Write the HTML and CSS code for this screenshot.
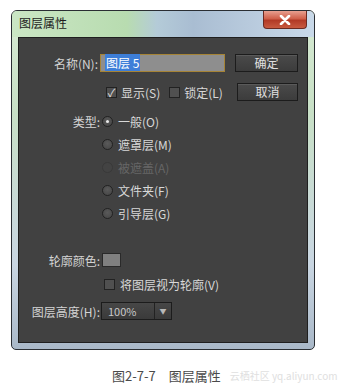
FILE: index.html
```html
<!DOCTYPE html>
<html>
<head>
  <title>图层属性</title>
  <link rel="stylesheet" href="styles.css">
</head>
<body>
  <div class="window">
    <div class="titlebar">
      <span class="title">图层属性</span>
      <span class="close">
        <svg width="14" height="10" viewBox="0 0 14 10"><path d="M3 1 L11 9 M11 1 L3 9" stroke="#fff" stroke-width="2.6" stroke-linecap="round"/></svg>
      </span>
    </div>
    <div class="content">
      <div class="top">
        <label class="lbl">名称(N):</label>
        <div class="name-input"><span class="sel">图层 5</span></div>
        <button class="btn">确定</button>

        <span></span>
        <div class="checks">
          <span class="check on">✓</span><span class="txt">显示(S)</span>
          <span class="check"></span><span class="txt">锁定(L)</span>
        </div>
        <button class="btn cancel">取消</button>
      </div>

      <div class="types">
        <div class="row">
          <label class="lbl">类型:</label>
          <span class="radio on"></span><span class="txt">一般(O)</span>
        </div>
        <div class="row">
          <span></span>
          <span class="radio"></span><span class="txt">遮罩层(M)</span>
        </div>
        <div class="row disabled">
          <span></span>
          <span class="radio"></span><span class="txt">被遮盖(A)</span>
        </div>
        <div class="row">
          <span></span>
          <span class="radio"></span><span class="txt">文件夹(F)</span>
        </div>
        <div class="row">
          <span></span>
          <span class="radio"></span><span class="txt">引导层(G)</span>
        </div>
      </div>

      <div class="row color-row">
        <label class="lbl">轮廓颜色:</label>
        <span class="swatch"></span>
      </div>
      <div class="row outline-row">
        <span></span>
        <span class="check"></span><span class="txt">将图层视为轮廓(V)</span>
      </div>
      <div class="row height-row">
        <label class="lbl">图层高度(H):</label>
        <div class="select">
          <span class="val">100%</span>
          <span class="arrow">▼</span>
        </div>
      </div>
    </div>
  </div>
  <div class="caption">
    <span>图2-7-7　图层属性</span>
    <span class="mark">云栖社区 yq.aliyun.com</span>
  </div>
</body>
</html>
```

FILE: styles.css
```css
body {
  margin: 0;
  padding: 10px 0 0 11px;
  background: #fff;
  font-family: "Noto Sans CJK SC", "Liberation Sans", sans-serif;
  font-size: 12px;
}

.window {
  width: 304px;
  height: 340px;
  border: 1px solid #2a2e33;
  border-radius: 6px 6px 5px 5px;
  background: linear-gradient(180deg, #d6ead2 0%, #c8e0c6 30%, #c9d6e2 75%, #a9b8c8 100%);
  padding: 0 6px 6px 6px;
  box-sizing: border-box;
  overflow: hidden;
}

.titlebar {
  height: 26px;
  margin: 0 -6px;
  padding: 0 7px 0 7px;
  display: flex;
  justify-content: space-between;
  align-items: flex-start;
  background: linear-gradient(90deg, #cae6c4 0%, #b8dcb0 38%, #b4cbd8 48%, #a9bdd2 60%, #c9d9e9 100%);
}

.title {
  margin-top: 5px;
  color: #1c1c1c;
  font-size: 12px;
  line-height: 14px;
}

.close {
  width: 44px;
  height: 18px;
  border: 1px solid #6b2a22;
  border-top: none;
  border-radius: 0 0 4px 4px;
  background: linear-gradient(180deg, #e8a090 0%, #d0604a 45%, #b23a26 55%, #c85a40 100%);
  display: flex;
  align-items: center;
  justify-content: center;
  box-sizing: border-box;
}

.content {
  height: 306px;
  background: #414141;
  border: 1px solid #1f1f1f;
  box-sizing: border-box;
  color: #d8d8d8;
  padding-top: 16px;
}

.top {
  display: grid;
  grid-template-columns: 81px 135px 63px;
  row-gap: 11px;
  align-items: center;
}

.lbl {
  text-align: right;
  padding-right: 2px;
  white-space: nowrap;
  color: #d4d4d4;
}

.name-input {
  height: 18px;
  width: 125px;
  box-sizing: border-box;
  border: 1px solid #a68436;
  background: #8e8e8e;
  padding: 1px 0 0 4px;
  line-height: 14px;
}

.sel {
  background: #3d7ed8;
  color: #fff;
  padding: 0 1px;
}

.btn {
  height: 18px;
  width: 63px;
  padding: 0;
  border: 1px solid #1c1c1c;
  background: linear-gradient(180deg, #4a4a4a 0%, #3c3c3c 100%);
  box-shadow: inset 0 1px 0 #5a5a5a;
  color: #e0e0e0;
  font-family: inherit;
  font-size: 12px;
  line-height: 14px;
}

.cancel {
  width: 61px;
  justify-self: end;
}

.checks {
  display: flex;
  align-items: center;
  padding-left: 6px;
}

.check {
  width: 11px;
  height: 11px;
  box-sizing: border-box;
  border: 1px solid #222;
  background: #505050;
  color: #e0e0e0;
  font-size: 11px;
  line-height: 9px;
  text-align: center;
  flex: none;
}

.txt {
  margin-left: 4px;
  margin-right: 9px;
  white-space: nowrap;
}

.types {
  margin-top: 11px;
  display: flex;
  flex-direction: column;
  gap: 5px;
}

.row {
  display: grid;
  grid-template-columns: 83px 11px auto;
  align-items: center;
  height: 18px;
}

.row .txt {
  margin-left: 5px;
}

.radio {
  width: 11px;
  height: 11px;
  box-sizing: border-box;
  border-radius: 50%;
  border: 1px solid #222;
  background: radial-gradient(circle at 50% 40%, #5a5a5a 0%, #444 100%);
  display: flex;
  align-items: center;
  justify-content: center;
}

.radio.on::after {
  content: "";
  width: 3px;
  height: 3px;
  border-radius: 50%;
  background: #e8e8e8;
}

.disabled .txt {
  color: #666;
}

.disabled .radio {
  border-color: #393939;
  background: #434343;
}

.color-row {
  margin-top: 29px;
  grid-template-columns: 83px auto;
}

.swatch {
  width: 19px;
  height: 14px;
  box-sizing: border-box;
  border: 1px solid #2a2a2a;
  background: #808080;
}

.outline-row {
  margin-top: 6px;
  grid-template-columns: 85px 11px auto;
}

.height-row {
  margin-top: 9px;
  grid-template-columns: 82px auto;
}

.height-row .lbl {
  padding-right: 1px;
}

.select {
  width: 71px;
  height: 18px;
  box-sizing: border-box;
  border: 1px solid #1c1c1c;
  background: linear-gradient(180deg, #474747 0%, #3a3a3a 100%);
  display: flex;
  align-items: center;
}

.val {
  flex: 1;
  padding-left: 6px;
  color: #c8c8c8;
  font-size: 11px;
}

.arrow {
  width: 16px;
  height: 16px;
  border-left: 1px solid #222;
  color: #b8b8b8;
  font-size: 7px;
  line-height: 16px;
  text-align: center;
}

.caption {
  margin-top: 16px;
  display: flex;
  align-items: center;
  padding-left: 101px;
  color: #4a4a4a;
  font-size: 13px;
  white-space: nowrap;
}

.mark {
  margin-left: 9px;
  color: #e0e0e0;
  font-size: 10px;
}
```
